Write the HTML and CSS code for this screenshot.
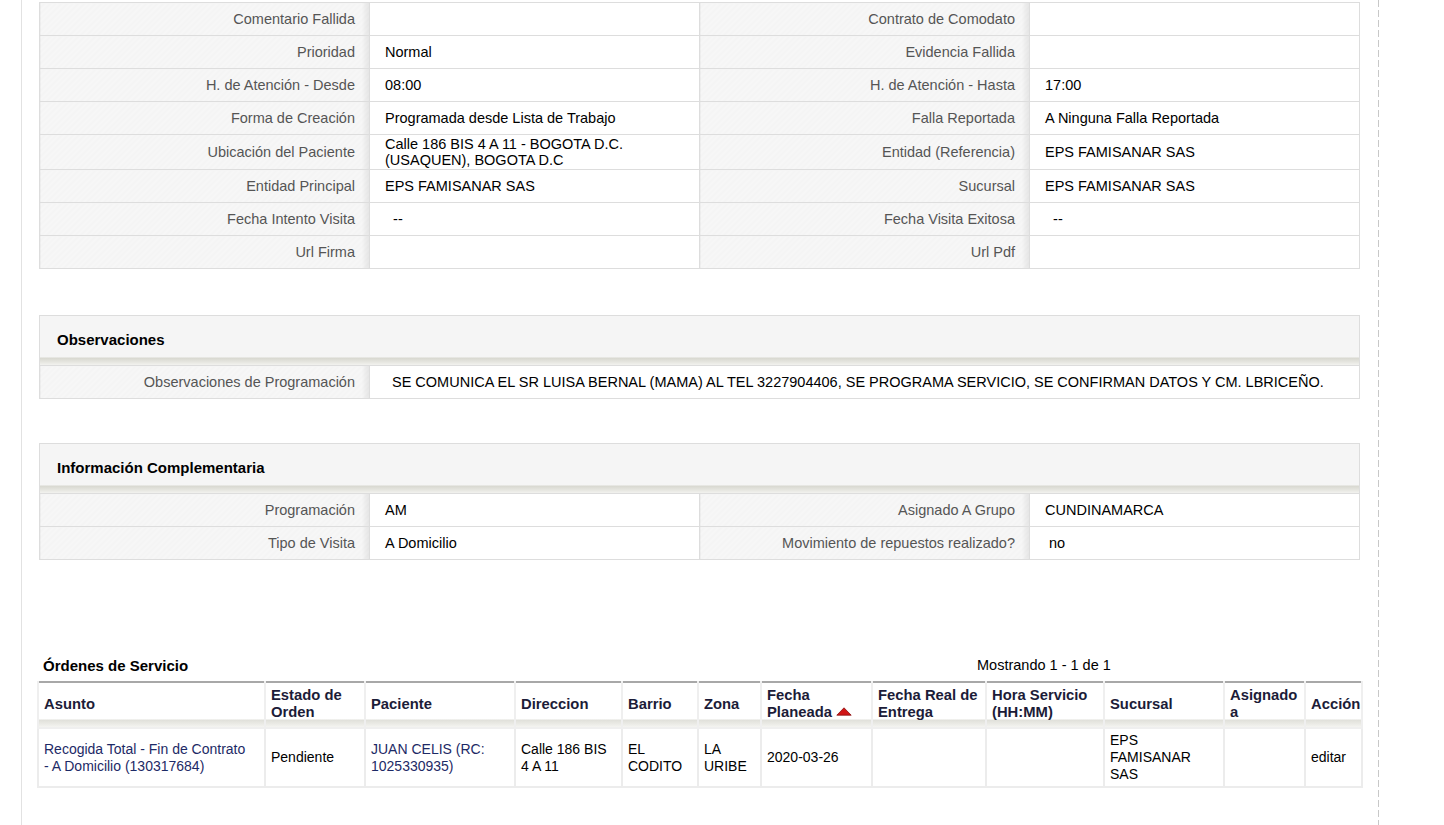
FILE: index.html
```html
<!DOCTYPE html>
<html lang="es">

<head>
  <meta charset="UTF-8" />
  <title>Detalle de Visita</title>
  <link rel="stylesheet" href="styles.css">
</head>

<body>
  <div class="page">
    <table class="detail">
      <colgroup>
        <col class="label-col"><col><col class="label-col"><col>
      </colgroup>
      <tr>
        <th>Comentario Fallida</th>
        <td></td>
        <th>Contrato de Comodato</th>
        <td></td>
      </tr>
      <tr>
        <th>Prioridad</th>
        <td>Normal</td>
        <th>Evidencia Fallida</th>
        <td></td>
      </tr>
      <tr>
        <th>H. de Atención - Desde</th>
        <td>08:00</td>
        <th>H. de Atención - Hasta</th>
        <td>17:00</td>
      </tr>
      <tr>
        <th>Forma de Creación</th>
        <td>Programada desde Lista de Trabajo</td>
        <th>Falla Reportada</th>
        <td>A Ninguna Falla Reportada</td>
      </tr>
      <tr>
        <th>Ubicación del Paciente</th>
        <td>Calle 186 BIS 4 A 11 - BOGOTA D.C. (USAQUEN), BOGOTA D.C</td>
        <th>Entidad (Referencia)</th>
        <td>EPS FAMISANAR SAS</td>
      </tr>
      <tr>
        <th>Entidad Principal</th>
        <td>EPS FAMISANAR SAS</td>
        <th>Sucursal</th>
        <td>EPS FAMISANAR SAS</td>
      </tr>
      <tr>
        <th>Fecha Intento Visita</th>
        <td>&nbsp; --</td>
        <th>Fecha Visita Exitosa</th>
        <td>&nbsp; --</td>
      </tr>
      <tr>
        <th>Url Firma</th>
        <td></td>
        <th>Url Pdf</th>
        <td></td>
      </tr>
    </table>

    <div class="panel">
      <div class="panel-title">Observaciones</div>
      <table class="detail">
        <colgroup>
          <col class="label-col"><col>
        </colgroup>
        <tr>
          <th>Observaciones de Programación</th>
          <td class="wide">SE COMUNICA EL SR LUISA BERNAL (MAMA) AL TEL 3227904406, SE PROGRAMA SERVICIO, SE CONFIRMAN DATOS Y CM. LBRICEÑO.</td>
        </tr>
      </table>
    </div>

    <div class="panel">
      <div class="panel-title">Información Complementaria</div>
      <table class="detail">
        <colgroup>
          <col class="label-col"><col><col class="label-col"><col>
        </colgroup>
        <tr>
          <th>Programación</th>
          <td>AM</td>
          <th>Asignado A Grupo</th>
          <td>CUNDINAMARCA</td>
        </tr>
        <tr>
          <th>Tipo de Visita</th>
          <td>A Domicilio</td>
          <th>Movimiento de repuestos realizado?</th>
          <td>&nbsp;no</td>
        </tr>
      </table>
    </div>

    <div class="orders">
      <div class="orders-head">
        <span class="orders-title">Órdenes de Servicio</span>
        <span>Mostrando 1 - 1 de 1</span>
      </div>
      <table class="orders-table">
        <colgroup>
          <col class="w-asunto">
          <col class="w-estado">
          <col class="w-paciente">
          <col class="w-dir">
          <col class="w-barrio">
          <col class="w-zona">
          <col class="w-fecha">
          <col class="w-real">
          <col class="w-hora">
          <col class="w-suc">
          <col class="w-asig">
          <col class="w-accion">
        </colgroup>
        <thead>
          <tr>
            <th>Asunto</th>
            <th>Estado de Orden</th>
            <th>Paciente</th>
            <th>Direccion</th>
            <th>Barrio</th>
            <th>Zona</th>
            <th>Fecha Planeada <svg class="sort" width="16" height="9" viewBox="0 0 16 9"><path d="M8 0.8 L15.2 8.2 H0.8 Z" fill="#d01515" stroke="#8a1010" stroke-width="0.8"/></svg></th>
            <th>Fecha Real de Entrega</th>
            <th>Hora Servicio (HH:MM)</th>
            <th>Sucursal</th>
            <th>Asignado a</th>
            <th>Acción</th>
          </tr>
        </thead>
        <tbody>
          <tr>
            <td class="link">Recogida Total - Fin de Contrato - A Domicilio (130317684)</td>
            <td>Pendiente</td>
            <td class="link">JUAN CELIS (RC: 1025330935)</td>
            <td>Calle 186 BIS 4 A 11</td>
            <td>EL CODITO</td>
            <td>LA URIBE</td>
            <td>2020-03-26</td>
            <td></td>
            <td></td>
            <td>EPS FAMISANAR SAS</td>
            <td></td>
            <td>editar</td>
          </tr>
        </tbody>
      </table>
    </div>
  </div>
</body>

</html>
```

FILE: styles.css
```css
body,
html {
  margin: 0;
  padding: 0;
  font-family: 'Liberation Sans', Arial, sans-serif;
  font-size: 14px;
  color: #000;
  background: #fff;
}

.page {
  box-sizing: border-box;
  width: 1358px;
  min-height: 100vh;
  margin-left: 21px;
  padding: 2px 19px 0 17px;
  border-left: 1px solid #e2e2e2;
  background: repeating-linear-gradient(to bottom, #c8c8c8 0, #c8c8c8 7px, transparent 7px, transparent 10px) right top / 1px 100% no-repeat;
}

/* tablas de detalle */
.detail {
  width: 100%;
  border-collapse: collapse;
  table-layout: fixed;
}

.label-col {
  width: 25%;
}

.detail th,
.detail td {
  height: 30px;
  padding: 1px 15px;
  border: 1px solid #ddd;
  line-height: 16px;
  font-size: 14.5px;
  vertical-align: middle;
  text-align: left;
}

.detail th {
  padding-right: 14px;
  font-weight: normal;
  text-align: right;
  color: #555;
  background:
    linear-gradient(to right, rgba(0, 0, 0, 0) calc(100% - 8px), rgba(0, 0, 0, 0.07)),
    repeating-linear-gradient(135deg, rgba(255, 255, 255, 0.25) 0, rgba(255, 255, 255, 0.25) 2px, transparent 2px, transparent 4px),
    #f4f4f4;
}

.detail td.wide {
  padding-left: 22px;
}

.panel {
  margin-top: 46px;
}

.panel + .panel {
  margin-top: 44px;
}

.panel-title {
  height: 17px;
  padding: 15px 17px 17px;
  border: 1px solid #ddd;
  border-bottom: none;
  font-size: 15px;
  font-weight: bold;
  line-height: 17px;
  background: linear-gradient(to bottom, #f5f5f5 0, #f5f5f5 calc(100% - 8px), #d8d8d0 calc(100% - 7px), #e6e6e0 calc(100% - 3px), #f2f2ef 100%);
}

/* ordenes de servicio */
.orders {
  margin-top: 97px;
}

.orders-head {
  display: grid;
  grid-template-columns: 934px auto;
  padding: 0 0 7px 4px;
  line-height: 17px;
  font-size: 14.5px;
}

.orders-title {
  font-size: 15px;
  font-weight: bold;
}

.orders-table {
  width: calc(100% + 4px);
  margin: 0 -2px;
  border-collapse: collapse;
  table-layout: fixed;
  border-top: 2px solid #a8a8a8;
}

.orders-table th {
  padding: 4px 5px 6px;
  border: 2px solid #efefef;
  border-top: none;
  line-height: 17px;
  font-size: 14.8px;
  font-weight: bold;
  text-align: left;
  color: #1c1c38;
  vertical-align: middle;
  background: linear-gradient(to bottom, #fff 0, #fff calc(100% - 8px), #e0e0da calc(100% - 7px), #ebebe6 calc(100% - 3px), #f4f4f1 100%);
}

.orders-table td {
  padding: 3px 9px 3px 5px;
  border: 2px solid #ececec;
  line-height: 17px;
  vertical-align: middle;
}

.orders-table td.link {
  padding-right: 15px;
  color: #1d2a66;
}

.sort {
  vertical-align: 1px;
}

.w-asunto { width: 227px; }
.w-estado { width: 100px; }
.w-paciente { width: 150px; }
.w-dir { width: 107px; }
.w-barrio { width: 76px; }
.w-zona { width: 63px; }
.w-fecha { width: 111px; }
.w-real { width: 114px; }
.w-hora { width: 118px; }
.w-suc { width: 120px; }
.w-asig { width: 81px; }
.w-accion { width: 57px; }
```
